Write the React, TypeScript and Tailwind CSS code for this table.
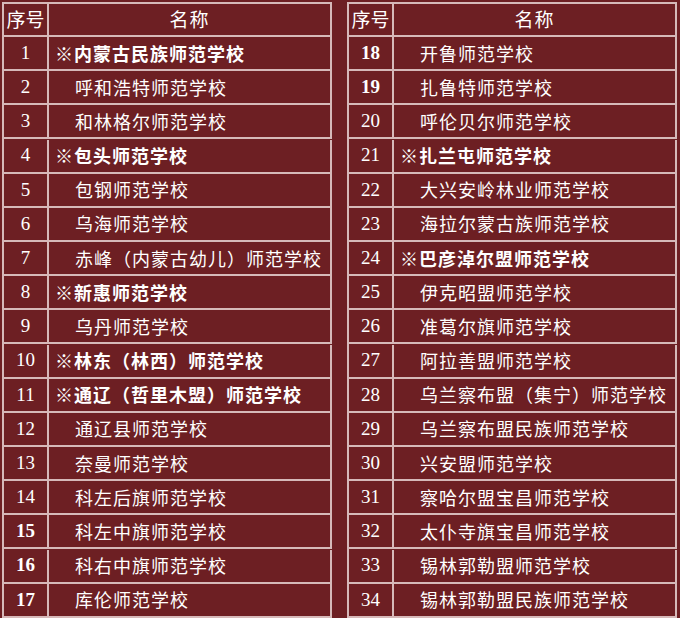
import React from 'react';

interface School {
  no: number;
  name: string;
  boldNo?: boolean;
  key?: boolean;
}

const left: School[] = [
  { no: 1, name: '※内蒙古民族师范学校', key: true },
  { no: 2, name: '呼和浩特师范学校' },
  { no: 3, name: '和林格尔师范学校' },
  { no: 4, name: '※包头师范学校', key: true },
  { no: 5, name: '包钢师范学校' },
  { no: 6, name: '乌海师范学校' },
  { no: 7, name: '赤峰（内蒙古幼儿）师范学校' },
  { no: 8, name: '※新惠师范学校', key: true },
  { no: 9, name: '乌丹师范学校' },
  { no: 10, name: '※林东（林西）师范学校', key: true },
  { no: 11, name: '※通辽（哲里木盟）师范学校', key: true },
  { no: 12, name: '通辽县师范学校' },
  { no: 13, name: '奈曼师范学校' },
  { no: 14, name: '科左后旗师范学校' },
  { no: 15, name: '科左中旗师范学校', boldNo: true },
  { no: 16, name: '科右中旗师范学校', boldNo: true },
  { no: 17, name: '库伦师范学校', boldNo: true },
];

const right: School[] = [
  { no: 18, name: '开鲁师范学校', boldNo: true },
  { no: 19, name: '扎鲁特师范学校', boldNo: true },
  { no: 20, name: '呼伦贝尔师范学校' },
  { no: 21, name: '※扎兰屯师范学校', key: true },
  { no: 22, name: '大兴安岭林业师范学校' },
  { no: 23, name: '海拉尔蒙古族师范学校' },
  { no: 24, name: '※巴彦淖尔盟师范学校', key: true },
  { no: 25, name: '伊克昭盟师范学校' },
  { no: 26, name: '准葛尔旗师范学校' },
  { no: 27, name: '阿拉善盟师范学校' },
  { no: 28, name: '乌兰察布盟（集宁）师范学校' },
  { no: 29, name: '乌兰察布盟民族师范学校' },
  { no: 30, name: '兴安盟师范学校' },
  { no: 31, name: '察哈尔盟宝昌师范学校' },
  { no: 32, name: '太仆寺旗宝昌师范学校' },
  { no: 33, name: '锡林郭勒盟师范学校' },
  { no: 34, name: '锡林郭勒盟民族师范学校' },
];

const cell = 'border-r-2 border-b-2 border-[#d6b9b9] flex items-center';

const SchoolTable: React.FC<{ rows: School[] }> = ({ rows }) => (
  <div className="grid grid-cols-[45px_283px] border-t-2 border-l-2 border-[#d6b9b9]">
    <div className={`${cell} h-[33px] justify-center text-[19px]`}>序号</div>
    <div className={`${cell} h-[33px] justify-center text-[19px] tracking-[1px]`}>名称</div>
    {rows.map((r) => (
      <React.Fragment key={r.no}>
        <div
          className={`${cell} h-[34px] justify-center text-[19px] font-['Liberation_Serif',serif] ${
            r.boldNo ? 'font-bold' : ''
          }`}
        >
          {r.no}
        </div>
        <div
          className={`${cell} h-[34px] whitespace-nowrap text-[18px] tracking-[1px] ${
            r.key ? 'pl-[6px] font-bold' : 'pl-[26px]'
          }`}
        >
          {r.name}
        </div>
      </React.Fragment>
    ))}
  </div>
);

export default function App() {
  return (
    <div className="w-[680px] h-[618px] bg-[#6d1f23] text-white font-['Noto_Sans_CJK_SC',sans-serif] pl-[2px] pt-[2px] flex gap-[15px] overflow-hidden">
      <SchoolTable rows={left} />
      <SchoolTable rows={right} />
    </div>
  );
}
